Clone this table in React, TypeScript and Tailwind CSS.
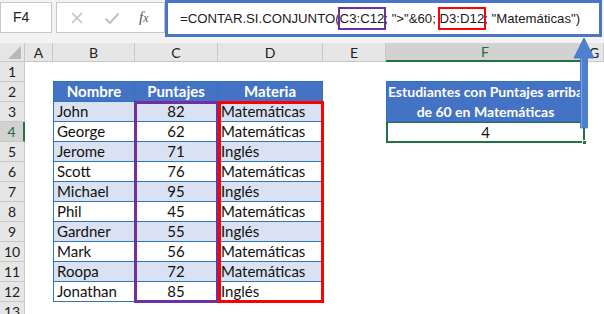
import React from "react";

const cols = [
  { id: "A", w: 28 },
  { id: "B", w: 82 },
  { id: "C", w: 83 },
  { id: "D", w: 105 },
  { id: "E", w: 63 },
  { id: "F", w: 199 },
  { id: "G", w: 19 },
];

const students = [
  { name: "John", score: 82, subject: "Matemáticas" },
  { name: "George", score: 62, subject: "Matemáticas" },
  { name: "Jerome", score: 71, subject: "Inglés" },
  { name: "Scott", score: 76, subject: "Matemáticas" },
  { name: "Michael", score: 95, subject: "Inglés" },
  { name: "Phil", score: 45, subject: "Matemáticas" },
  { name: "Gardner", score: 55, subject: "Inglés" },
  { name: "Mark", score: 56, subject: "Matemáticas" },
  { name: "Roopa", score: 72, subject: "Matemáticas" },
  { name: "Jonathan", score: 85, subject: "Inglés" },
];

const cellFont = { fontFamily: "Lato, 'Open Sans', sans-serif" };
const uiFont = { fontFamily: "'Liberation Sans', Arial, sans-serif" };

function FormulaBar() {
  return (
    <div className="relative flex h-[43px] items-start bg-[#f3f3f3]" style={uiFont}>
      <div className="mt-[2px] flex h-[31px] w-[52px] items-center border border-[#c8c8c8] bg-white pl-[12px] text-[14px] text-[#222]">
        F4
      </div>
      <div className="ml-[4px] mt-[2px] flex h-[31px] w-[109px] items-center border border-[#c8c8c8] bg-white">
        <svg width="14" height="14" viewBox="0 0 14 14" className="ml-[13px]">
          <path d="M2 2 L12 12 M12 2 L2 12" stroke="#c2c2c2" strokeWidth="1.6" />
        </svg>
        <svg width="16" height="14" viewBox="0 0 16 14" className="ml-[20px]">
          <path d="M1.5 7.5 L6 12 L14.5 2.5" stroke="#c2c2c2" strokeWidth="2" fill="none" />
        </svg>
        <span className="ml-[19px] text-[15px] italic text-[#555]" style={{ fontFamily: "'Liberation Serif', serif" }}>
          f<span className="text-[12px]">x</span>
        </span>
      </div>
      <div className="flex h-[37px] w-[437px] items-center border-[3px] border-[#4a74c6] bg-white pl-[12px] text-[13.2px] text-[#1a1a1a]">
        <span>=CONTAR.SI.CONJUNTO(</span>
        <span className="outline outline-2 outline-[#7030a0]">C3:C12</span>
        <span className="whitespace-pre">; "&gt;"&amp;60; </span>
        <span className="outline outline-2 outline-[#ff0000]">D3:D12</span>
        <span className="whitespace-pre">; "Matemáticas")</span>
      </div>
    </div>
  );
}

function ColumnHeaders() {
  return (
    <div className="flex h-[19px] bg-[#e6e6e6] text-[14px] text-[#222]">
      <div className="relative h-full w-[25px] border-r border-b border-[#c8c8c8]">
        <svg width="13" height="13" viewBox="0 0 13 13" className="absolute bottom-[2px] right-[3px]">
          <path d="M13 0 L13 13 L0 13 Z" fill="#b8b8b8" />
        </svg>
      </div>
      {cols.map((c) => (
        <div
          key={c.id}
          className={
            c.id === "F"
              ? "flex h-full items-center justify-center border-r border-b-2 border-r-[#c8c8c8] border-b-[#217346] bg-[#d2d2d2] text-[#1e6b40]"
              : "flex h-full items-center justify-center border-r border-b border-[#c8c8c8]"
          }
          style={{ width: c.w }}
        >
          {c.id}
        </div>
      ))}
    </div>
  );
}

function RowHeader({ n }: { n: number }) {
  return (
    <div
      className={
        n === 4
          ? "flex h-full w-[25px] shrink-0 items-center justify-center border-b border-r-2 border-b-[#c8c8c8] border-r-[#217346] bg-[#d2d2d2] text-[14px] text-[#1e6b40]"
          : "flex h-full w-[25px] shrink-0 items-center justify-center border-b border-r border-[#c8c8c8] bg-[#e6e6e6] text-[14px] text-[#222]"
      }
    >
      {n}
    </div>
  );
}

export default function App() {
  const tableCell = "flex h-full items-center border-b border-r border-[#2e75b6] px-[3px] text-[15px] text-[#111]";

  return (
    <div className="relative h-[314px] w-[604px] overflow-hidden bg-white" style={cellFont}>
      <FormulaBar />
      <ColumnHeaders />

      {/* row 1 */}
      <div className="flex h-[20px]">
        <RowHeader n={1} />
        <div style={{ width: 28 }} />
        <div className="h-full border-b border-[#2e75b6]" style={{ width: 270 }} />
      </div>

      {/* row 2: table headers + merged F2:F3 */}
      <div className="flex h-[20px]">
        <RowHeader n={2} />
        <div style={{ width: 28 }} />
        {["Nombre", "Puntajes", "Materia"].map((h, i) => (
          <div
            key={h}
            className="flex h-full items-center justify-center border-b border-r border-[#2e75b6] bg-[#4472c4] text-[15px] font-bold text-white"
            style={{ width: [82, 83, 105][i], borderLeftWidth: i === 0 ? 1 : 0 }}
          >
            {h}
          </div>
        ))}
        <div style={{ width: 63 }} />
        <div className="relative" style={{ width: 199 }}>
          <div className="absolute left-0 top-[-1px] z-10 flex h-[41px] w-[199px] flex-col items-center justify-center overflow-hidden border border-[#2e75b6] bg-[#4472c4] text-[14px] font-bold leading-[20px] text-white">
            <span className="whitespace-nowrap">Estudiantes con Puntajes arriba</span>
            <span>de 60 en Matemáticas</span>
          </div>
        </div>
      </div>

      {students.map((s, i) => {
        const row = i + 3;
        const bg = i % 2 === 0 ? "bg-[#d9e1f2]" : "bg-white";
        return (
          <div key={s.name} className="flex h-[20px]">
            <RowHeader n={row} />
            <div style={{ width: 28 }} />
            <div className={`${tableCell} ${bg} border-l`} style={{ width: 82 }}>
              {s.name}
            </div>
            <div className={`${tableCell} ${bg} justify-center`} style={{ width: 83 }}>
              {s.score}
            </div>
            <div className={`${tableCell} ${bg}`} style={{ width: 105 }}>
              {s.subject}
            </div>
            <div style={{ width: 63 }} />
            {row === 4 && (
              <div className="flex h-full items-center justify-center text-[15px] text-[#111]" style={{ width: 199 }}>
                4
              </div>
            )}
          </div>
        );
      })}

      <div className="flex h-[20px]">
        <RowHeader n={13} />
      </div>

      {/* range highlights */}
      <div className="pointer-events-none absolute left-[134px] top-[101px] h-[202px] w-[85px] border-[3px] border-[#7030a0]" />
      <div className="pointer-events-none absolute left-[218px] top-[101px] h-[202px] w-[106px] border-[3px] border-[#ff0000]" />

      {/* active cell F4 */}
      <div className="pointer-events-none absolute left-[386px] top-[121px] h-[22px] w-[199px] border-2 border-[#217346]" />
      <div className="pointer-events-none absolute left-[582px] top-[140px] h-[5px] w-[5px] border border-white bg-[#217346]" />

      {/* arrow to formula */}
      <svg className="pointer-events-none absolute left-[570px] top-[36px] z-20" width="28" height="94" viewBox="0 0 28 94">
        <path d="M10.5 92 L10.5 22 L4 22 L14 2 L24 22 L17.5 22 L17.5 92 Z" fill="#4f7fcf" stroke="#3f6fbf" strokeWidth="0.8" />
        <path d="M11.5 92 L11.5 22" stroke="#7ea2e0" strokeWidth="1" />
      </svg>
    </div>
  );
}
